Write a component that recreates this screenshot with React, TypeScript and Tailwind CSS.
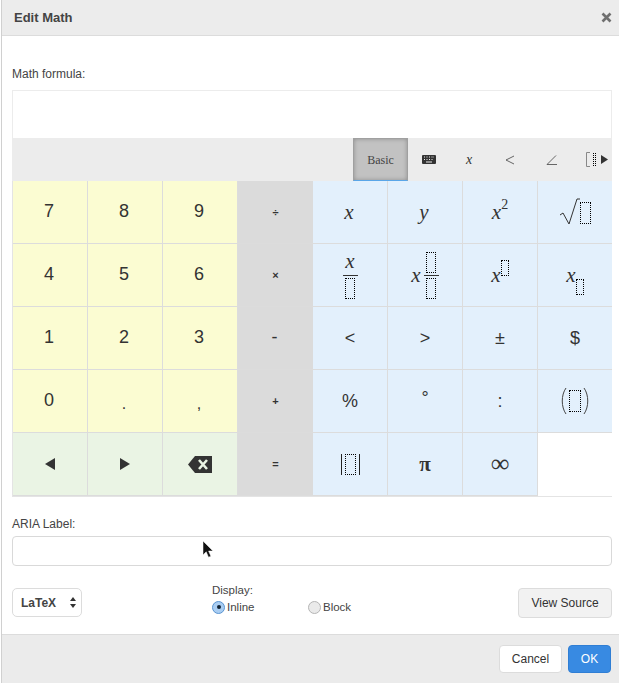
import React, { FunctionComponent, ReactNode } from "react";
import clsx from "clsx";

const Box: FunctionComponent<{ className?: string }> = ({ className }) => (
  <span className={clsx("inline-block border border-dotted border-black", className)} />
);

const Var: FunctionComponent<{ children: ReactNode }> = ({ children }) => (
  <span className="font-['Liberation_Serif',serif] italic text-[21px] leading-none text-[#333]">{children}</span>
);

const Frac: FunctionComponent<{ top: ReactNode }> = ({ top }) => (
  <span className="inline-flex flex-col items-center">
    <span className="flex h-[24px] items-end justify-center pb-[3px]">{top}</span>
    <span className="h-px w-[15px] bg-[#333]" />
    <Box className="mt-[2px] h-[21px] w-[10px]" />
  </span>
);

type Tone = "num" | "op" | "sym" | "nav";

const tones: Record<Tone, string> = {
  num: "bg-[#fbfcd2]",
  op: "bg-[#dbdbdb]",
  sym: "bg-[#e3f0fc]",
  nav: "bg-[#eaf4e4]",
};

const Key: FunctionComponent<{ tone: Tone; children?: ReactNode; className?: string }> = ({
  tone,
  children,
  className,
}) => (
  <div
    className={clsx(
      "flex h-[63px] items-center justify-center border-b border-r border-[#dcdcdc] text-[#333]",
      tones[tone],
      className
    )}
  >
    {children}
  </div>
);

const Num: FunctionComponent<{ children: ReactNode }> = ({ children }) => (
  <span className="-ml-[2px] -mt-[2px] text-[18px] leading-none">{children}</span>
);
const Small: FunctionComponent<{ children: ReactNode }> = ({ children }) => (
  <span className="text-[11px] font-bold leading-none">{children}</span>
);
const Sym: FunctionComponent<{ children: ReactNode }> = ({ children }) => (
  <span className="text-[18px] leading-none">{children}</span>
);

const App: FunctionComponent = () => {
  return (
    <div className="relative h-[683px] w-[619px] overflow-hidden bg-white font-['Liberation_Sans',Arial,sans-serif] text-[#333]">
      <div className="ml-px flex h-full flex-col border-l border-[#d0d0d0]">
        <div className="flex h-[36px] items-center justify-between border-b border-[#dcdcdc] bg-[#ececec] pl-[12px] pr-[7px]">
          <span className="text-[13px] font-bold text-[#444]">Edit Math</span>
          <svg width="11" height="11" viewBox="0 0 11 11" className="text-[#6f6f6f]">
            <path d="M1.500 1.500l8 8M9.500 1.500l-8 8" stroke="currentColor" strokeWidth="2.600" />
          </svg>
        </div>

        <div className="flex flex-1 flex-col pl-[10px] pr-[7px]">
          <label className="mt-[32px] text-[12px] leading-[13px] text-[#444]">Math formula:</label>
          <div className="mt-[9px] h-[48px] border border-b-0 border-[#ececec] bg-white" />
          <div className="flex h-[43px] items-stretch bg-[#ececec] pl-[341px]">
            <div className="flex w-[55px] items-center justify-center border border-[#a0a0a0] border-b-[#5aa6e8] bg-[#c2c2c2] font-['Liberation_Serif',serif] text-[12px] text-[#444] shadow-[inset_0_0_4px_#8e8e8e]">
              Basic
            </div>
            <div className="flex w-[41px] items-center justify-center">
              <svg width="14" height="9" viewBox="0 0 14 9">
                <rect width="14" height="9" rx="1" fill="#333" />
                <path d="M2 2h1M4.500 2h1M7 2h1M9.500 2h1M12 2h-.5M2 4.500h1M4.500 4.500h1M7 4.500h1M9.500 4.500h1M4 7h6" stroke="#ececec" strokeWidth="1" />
              </svg>
            </div>
            <div className="flex w-[40px] items-center justify-center font-['Liberation_Serif',serif] text-[14px] italic">x</div>
            <div className="flex w-[41px] items-center justify-center">
              <svg width="10" height="10" viewBox="0 0 10 10"><path d="M9 1L1 5l8 4" fill="none" stroke="#444" strokeWidth="0.800" /></svg>
            </div>
            <div className="flex w-[42px] items-center justify-center">
              <svg width="11" height="10" viewBox="0 0 11 10"><path d="M10 .5L1 9.500h10" fill="none" stroke="#444" strokeWidth="0.800" /></svg>
            </div>
            <div className="flex flex-1 items-center pl-[14px]">
              <svg width="4" height="15" viewBox="0 0 4 15"><path d="M4 .5H.5v14H4" fill="none" stroke="#888" strokeWidth="1" /></svg>
              <Box className="ml-[3px] h-[13px] w-[3px]" />
              <svg width="7" height="9" viewBox="0 0 7 9" className="ml-[5px]"><path d="M0 0l7 4.500L0 9z" fill="#333" /></svg>
            </div>
          </div>

          <div className="grid grid-cols-[75px_75px_75px_75px_75px_75px_75px_74px] border-b border-l border-[#e4e4e4]">
            <Key tone="num"><Num>7</Num></Key>
            <Key tone="num"><Num>8</Num></Key>
            <Key tone="num"><Num>9</Num></Key>
            <Key tone="op" className="border-r-0"><Small>÷</Small></Key>
            <Key tone="sym"><span className="-ml-[2px] leading-none"><Var>x</Var></span></Key>
            <Key tone="sym"><span className="-ml-[2px] leading-none"><Var>y</Var></span></Key>
            <Key tone="sym"><span className="flex items-start"><Var>x</Var><span className="-mt-[4px] font-['Liberation_Serif',serif] text-[14px] leading-none">2</span></span></Key>
            <Key tone="sym" className="border-r-0">
              <span className="flex items-start">
                <svg width="21" height="28" viewBox="0 0 21 28"><path d="M1 17l3-2 6 11L18 1h3" fill="none" stroke="#333" strokeWidth="1" /></svg>
                <Box className="mt-[4px] h-[22px] w-[11px]" />
              </span>
            </Key>

            <Key tone="num"><Num>4</Num></Key>
            <Key tone="num"><Num>5</Num></Key>
            <Key tone="num"><Num>6</Num></Key>
            <Key tone="op" className="border-r-0"><Small>×</Small></Key>
            <Key tone="sym"><Frac top={<Var>x</Var>} /></Key>
            <Key tone="sym">
              <span className="flex items-center gap-[3px]">
                <Var>x</Var>
                <span className="inline-flex flex-col items-center">
                  <Box className="mb-[2px] h-[21px] w-[10px]" />
                  <span className="h-px w-[15px] bg-[#333]" />
                  <Box className="mt-[2px] h-[21px] w-[10px]" />
                </span>
              </span>
            </Key>
            <Key tone="sym"><span className="flex items-start"><Var>x</Var><Box className="-mt-[5px] h-[16px] w-[8px]" /></span></Key>
            <Key tone="sym" className="border-r-0"><span className="flex items-end"><Var>x</Var><Box className="-mb-[9px] h-[16px] w-[8px]" /></span></Key>

            <Key tone="num"><Num>1</Num></Key>
            <Key tone="num"><Num>2</Num></Key>
            <Key tone="num"><Num>3</Num></Key>
            <Key tone="op" className="border-r-0"><Num>-</Num></Key>
            <Key tone="sym"><Sym>&lt;</Sym></Key>
            <Key tone="sym"><Sym>&gt;</Sym></Key>
            <Key tone="sym"><Sym>±</Sym></Key>
            <Key tone="sym" className="border-r-0"><Sym>$</Sym></Key>

            <Key tone="num"><Num>0</Num></Key>
            <Key tone="num"><span className="mt-[5px] -ml-[2px] text-[16px] leading-none">.</span></Key>
            <Key tone="num"><span className="mt-[5px] -ml-[2px] text-[16px] leading-none">,</span></Key>
            <Key tone="op" className="border-r-0"><Small>+</Small></Key>
            <Key tone="sym"><Sym>%</Sym></Key>
            <Key tone="sym"><span className="-mt-[6px] text-[18px] leading-none">°</span></Key>
            <Key tone="sym"><Sym>:</Sym></Key>
            <Key tone="sym" className="border-r-0">
              <span className="flex items-center gap-[2px]">
                <svg width="7" height="28" viewBox="0 0 7 28"><path d="M6 1C1 8 1 20 6 27" fill="none" stroke="#444" strokeWidth="1" /></svg>
                <Box className="h-[22px] w-[12px]" />
                <svg width="7" height="28" viewBox="0 0 7 28"><path d="M1 1c5 7 5 19 0 26" fill="none" stroke="#444" strokeWidth="1" /></svg>
              </span>
            </Key>

            <Key tone="nav">
              <svg width="10" height="12" viewBox="0 0 10 12"><path d="M10 0v12L0 6z" fill="#333" /></svg>
            </Key>
            <Key tone="nav">
              <svg width="10" height="12" viewBox="0 0 10 12"><path d="M0 0v12l10-6z" fill="#333" /></svg>
            </Key>
            <Key tone="nav">
              <svg width="24" height="17" viewBox="0 0 24 17">
                <path d="M7 0h17v17H7L0 8.500z" fill="#333" />
                <path d="M11 4l8 9M19 4l-8 9" stroke="#eaf4e4" strokeWidth="2.600" />
              </svg>
            </Key>
            <Key tone="op" className="border-r-0"><Small>=</Small></Key>
            <Key tone="sym">
              <span className="flex items-center gap-[3px]">
                <span className="h-[21px] w-px bg-[#222]" />
                <Box className="h-[21px] w-[11px]" />
                <span className="h-[21px] w-px bg-[#222]" />
              </span>
            </Key>
            <Key tone="sym"><span className="font-['Liberation_Serif',serif] text-[21px] font-bold leading-none">π</span></Key>
            <Key tone="sym"><span className="font-['Liberation_Serif',serif] text-[26px] leading-none">∞</span></Key>
            <div className="h-[63px] bg-white" />
          </div>

          <label className="mt-[21px] text-[12px] leading-[13px] text-[#444]">ARIA Label:</label>
          <input className="mt-[5px] h-[30px] rounded-[4px] border border-[#d9d9d9] bg-white" />

          <div className="mt-[17px] flex h-[35px] items-start">
            <div className="mt-[5px] flex h-[29px] w-[70px] items-center justify-between rounded-[5px] border border-[#dcdcdc] pl-[8px] pr-[5px]">
              <span className="text-[12px] font-bold text-[#444]">LaTeX</span>
              <svg width="6" height="11" viewBox="0 0 6 11"><path d="M3 0l3 4H0zM3 11L0 7h6z" fill="#333" /></svg>
            </div>
            <div className="ml-[130px] mt-[1px] flex w-[145px] flex-col">
              <span className="text-[11.500px] leading-[13px] text-[#444]">Display:</span>
              <div className="mt-[3px] flex items-center">
                <span className="flex h-[13px] w-[13px] items-center justify-center rounded-full border border-[#5a94d0] bg-[#a9cdf2]">
                  <span className="h-[4px] w-[4px] rounded-full bg-[#123]" />
                </span>
                <span className="ml-[2px] w-[81px] text-[11.500px] leading-[14px] text-[#444]">Inline</span>
                <span className="h-[13px] w-[13px] rounded-full border border-[#b5b5b5] bg-[#eaeaea]" />
                <span className="ml-[2px] text-[11.500px] leading-[14px] text-[#444]">Block</span>
              </div>
            </div>
            <button className="ml-auto mt-[5px] h-[30px] w-[94px] rounded-[4px] border border-[#dcdcdc] bg-[#f2f2f2] text-[12px] text-[#333]">
              View Source
            </button>
          </div>
        </div>

        <div className="flex h-[49px] items-start justify-end gap-[6px] border-t border-[#dcdcdc] bg-[#ebebeb] pr-[8px] pt-[10px]">
          <button className="h-[28px] w-[63px] rounded-[4px] border border-[#dcdcdc] bg-white text-[12px] text-[#333]">Cancel</button>
          <button className="h-[28px] w-[43px] rounded-[4px] border border-[#2f7ed4] bg-[#388ae2] text-[12px] text-white">OK</button>
        </div>
      </div>

      <svg width="14" height="19" viewBox="0 0 14 19" className="absolute left-[202px] top-[541px]">
        <path d="M1 0v14l3.200-3.200 2.300 5.400 2.400-1-2.300-5.200h4.400z" fill="#111" stroke="#fff" strokeWidth="0.500" />
      </svg>
    </div>
  );
};

export default App;
